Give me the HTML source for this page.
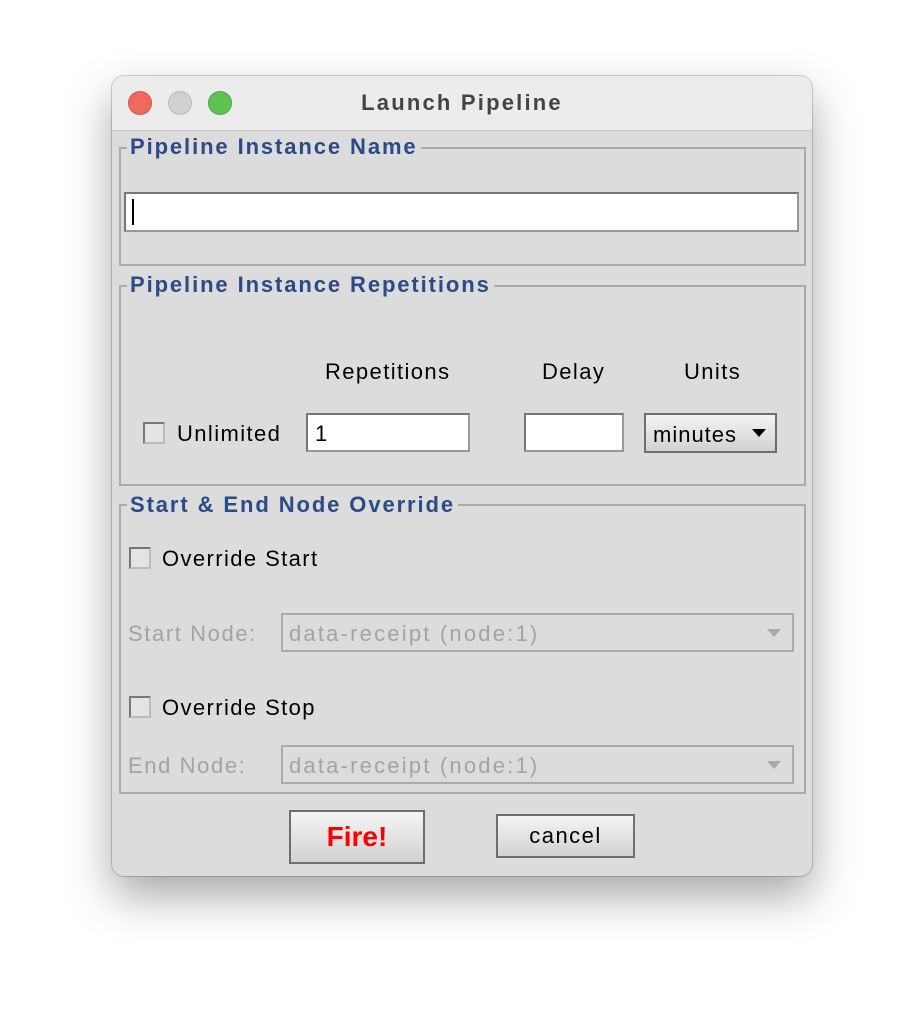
<!DOCTYPE html>
<html><head><style>
body{margin:0;width:924px;height:1024px;background:#fff;position:relative;font-family:"Liberation Sans",sans-serif;overflow:hidden}
.a{position:absolute}
.win{left:112px;top:76px;width:700px;height:800px;border-radius:12px;background:#dcdcdc;box-shadow:0 20px 45px rgba(0,0,0,.35),0 0 0 1px rgba(0,0,0,.18);overflow:hidden}
.tb{left:0;top:0;width:700px;height:54px;background:#ececec;border-bottom:1px solid #c6c6c6}
.dot{width:24px;height:24px;border-radius:50%;top:15px}
.pan{border:2px solid #aaa;box-sizing:border-box}
.tt{background:#dcdcdc;color:#2a4a88;font-weight:bold;font-size:22px;padding:0 3px;line-height:24px;letter-spacing:1.9px}
.fld{background:#fff;border:2px solid #777;box-sizing:border-box;border-right-color:#999;border-bottom-color:#999}
.lbl{font-size:22px;color:#000;line-height:24px;letter-spacing:1.4px;white-space:nowrap}
.gr{color:#a3a3a3;letter-spacing:1.6px}
.dr{letter-spacing:2.2px}
.cb{width:22px;height:22px;border:2px solid #777;box-sizing:border-box;background:#e4e4e4;border-right-color:#bbb;border-bottom-color:#bbb}
.btn{background:linear-gradient(#f4f4f4,#d2d2d2);border:2px solid #6e6e6e;box-sizing:border-box;text-align:center}
.dis{border:2px solid #aaa;box-sizing:border-box}
.arr{width:0;height:0;border-left:7px solid transparent;border-right:7px solid transparent;border-top:8px solid #000}
</style></head><body>
<div class="a win">
 <div class="a tb"></div>
 <div class="a dot" style="left:16px;background:#ee6a5f;border:1px solid #d35449;box-sizing:border-box"></div>
 <div class="a dot" style="left:56px;background:#d0d0d0;border:1px solid #bbb;box-sizing:border-box"></div>
 <div class="a dot" style="left:96px;background:#5ec354;border:1px solid #4aa843;box-sizing:border-box"></div>
 <div class="a" style="left:0;width:700px;top:14px;text-align:center;font-weight:bold;font-size:22px;color:#444;letter-spacing:2.2px">Launch Pipeline</div>
</div>
<!-- panel 1 -->
<div class="a pan" style="left:119px;top:147px;width:687px;height:119px"></div>
<div class="a tt" style="left:127px;top:135px">Pipeline Instance Name</div>
<div class="a fld" style="left:124px;top:192px;width:675px;height:40px"></div>
<div class="a" style="left:132px;top:199px;width:2px;height:26px;background:#000"></div>
<!-- panel 2 -->
<div class="a pan" style="left:119px;top:285px;width:687px;height:201px"></div>
<div class="a tt" style="left:127px;top:273px">Pipeline Instance Repetitions</div>
<div class="a lbl" style="left:325px;top:360px">Repetitions</div>
<div class="a lbl" style="left:542px;top:360px">Delay</div>
<div class="a lbl" style="left:684px;top:360px">Units</div>
<div class="a cb" style="left:143px;top:422px"></div>
<div class="a lbl" style="left:177px;top:422px">Unlimited</div>
<div class="a fld" style="left:306px;top:413px;width:164px;height:39px"></div>
<div class="a lbl" style="left:315px;top:422px">1</div>
<div class="a fld" style="left:524px;top:413px;width:100px;height:39px"></div>
<div class="a btn" style="left:644px;top:413px;width:133px;height:40px;text-align:left"><span class="lbl a" style="left:7px;top:8px;letter-spacing:1px">minutes</span><div class="a arr" style="left:106px;top:14px"></div></div>
<!-- panel 3 -->
<div class="a pan" style="left:119px;top:504px;width:687px;height:290px"></div>
<div class="a tt" style="left:127px;top:493px">Start &amp; End Node Override</div>
<div class="a cb" style="left:129px;top:547px"></div>
<div class="a lbl" style="left:162px;top:547px">Override Start</div>
<div class="a lbl gr" style="left:128px;top:622px">Start Node:</div>
<div class="a dis" style="left:281px;top:613px;width:513px;height:39px"></div>
<div class="a lbl gr dr" style="left:289px;top:622px">data-receipt (node:1)</div>
<div class="a arr" style="left:767px;top:629px;border-top-color:#aaa"></div>
<div class="a cb" style="left:129px;top:696px"></div>
<div class="a lbl" style="left:162px;top:696px">Override Stop</div>
<div class="a lbl gr" style="left:128px;top:754px">End Node:</div>
<div class="a dis" style="left:281px;top:745px;width:513px;height:39px"></div>
<div class="a lbl gr dr" style="left:289px;top:754px">data-receipt (node:1)</div>
<div class="a arr" style="left:767px;top:761px;border-top-color:#aaa"></div>
<!-- buttons -->
<div class="a btn" style="left:289px;top:810px;width:136px;height:54px;line-height:50px;color:#f00;font-weight:bold;font-size:28px">Fire!</div>
<div class="a btn" style="left:496px;top:814px;width:139px;height:44px;line-height:40px;font-size:22px;letter-spacing:1.5px">cancel</div>
</body></html>
